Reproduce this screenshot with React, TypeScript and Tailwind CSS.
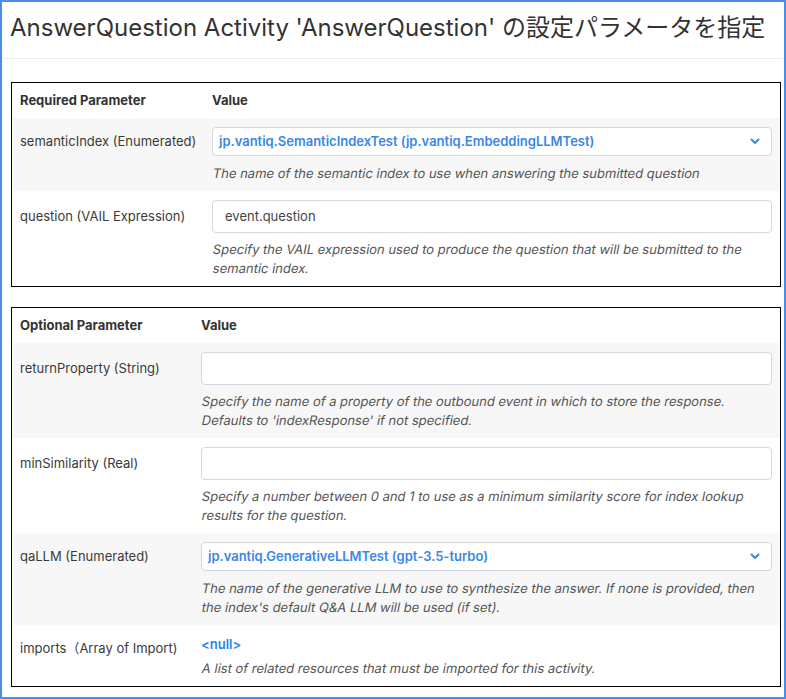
import React from "react";

const FONT = "font-['Inter','Noto_Sans_CJK_JP',sans-serif]";

function Chevron() {
  return (
    <svg width="10" height="7" viewBox="0 0 10 7" className="shrink-0">
      <polyline points="1.5,1.5 5,5 8.5,1.5" fill="none" stroke="#3a87e8" strokeWidth="2" strokeLinecap="round" strokeLinejoin="round" />
    </svg>
  );
}

type RowProps = {
  label: string;
  kind: "select" | "input" | "null";
  value?: string;
  desc: string[];
  gray?: boolean;
  labelW: string;
};

function Row({ label, kind, value, desc, gray, labelW }: RowProps) {
  const ctrlH = kind === "select" ? "h-[29px]" : kind === "input" ? "h-[33px]" : "h-[29px]";
  const mt = kind === "null" ? "mt-[5px]" : kind === "input" ? "mt-[7px]" : "mt-[8px]";
  return (
    <div className={`flex ${gray ? "bg-[#f7f7f7]" : "bg-white"}`}>
      <div className={`${labelW} shrink-0 pl-[8px] pt-[9px]`}>
        <div className={`${ctrlH} flex items-center text-[13px] text-[#3a3a3a]`}>{label}</div>
      </div>
      <div className="flex-1 pl-[8px] pr-[8px] pt-[9px] pb-[8px]">
        {kind === "select" && (
          <div className="h-[29px] rounded-[4px] border border-[#d3d6de] bg-white flex items-center justify-between pl-[6px] pr-[11px]">
            <span className="text-[13px] font-semibold text-[#3a87e8]">{value}</span>
            <Chevron />
          </div>
        )}
        {kind === "input" && (
          <div className="h-[33px] rounded-[4px] border border-[#d3d6de] bg-white flex items-center pl-[12px]">
            <span className="text-[13px] text-[#444]">{value}</span>
          </div>
        )}
        {kind === "null" && (
          <div className="h-[19px] mt-[1px] flex items-center text-[13px] font-semibold text-[#2f80ed]">&lt;null&gt;</div>
        )}
        <div className={`${mt} text-[13px] text-[#555]`}>
          {desc.map((d, i) => (
            <div key={i} className="h-[19px] flex items-center">
              <span className="-skew-x-[11deg] origin-[0_75%] whitespace-nowrap">{d}</span>
            </div>
          ))}
        </div>
      </div>
    </div>
  );
}

function Header({ left, labelW }: { left: string; labelW: string }) {
  return (
    <div className="flex h-[35px] items-center text-[13px] font-bold text-[#333]">
      <div className={`${labelW} shrink-0 pl-[8px]`}>{left}</div>
      <div className="pl-[8px]">Value</div>
    </div>
  );
}

export default function App() {
  return (
    <div className={`w-[786px] h-[699px] border-2 border-[#4a8fe7] bg-white overflow-hidden ${FONT}`}>
      <div className="h-[57px] border-b border-[#ededed] flex items-center pl-[8px] pb-[5px]">
        <h1 className="text-[24px] text-[#333] whitespace-nowrap">
          AnswerQuestion Activity 'AnswerQuestion' の設定パラメータを指定
        </h1>
      </div>
      <div className="pl-[9px] pt-[23px]">
        <div className="w-[770px] border border-black">
          <Header left="Required Parameter" labelW="w-[192px]" />
          <Row
            gray
            labelW="w-[192px]"
            label="semanticIndex (Enumerated)"
            kind="select"
            value="jp.vantiq.SemanticIndexTest (jp.vantiq.EmbeddingLLMTest)"
            desc={["The name of the semantic index to use when answering the submitted question"]}
          />
          <Row
            labelW="w-[192px]"
            label="question (VAIL Expression)"
            kind="input"
            value="event.question"
            desc={[
              "Specify the VAIL expression used to produce the question that will be submitted to the",
              "semantic index.",
            ]}
          />
        </div>
        <div className="mt-[20px] w-[770px] border border-black">
          <Header left="Optional Parameter" labelW="w-[181px]" />
          <Row
            gray
            labelW="w-[181px]"
            label="returnProperty (String)"
            kind="input"
            value=""
            desc={[
              "Specify the name of a property of the outbound event in which to store the response.",
              "Defaults to 'indexResponse' if not specified.",
            ]}
          />
          <Row
            labelW="w-[181px]"
            label="minSimilarity (Real)"
            kind="input"
            value=""
            desc={[
              "Specify a number between 0 and 1 to use as a minimum similarity score for index lookup",
              "results for the question.",
            ]}
          />
          <Row
            gray
            labelW="w-[181px]"
            label="qaLLM (Enumerated)"
            kind="select"
            value="jp.vantiq.GenerativeLLMTest (gpt-3.5-turbo)"
            desc={[
              "The name of the generative LLM to use to synthesize the answer. If none is provided, then",
              "the index's default Q&A LLM will be used (if set).",
            ]}
          />
          <Row
            labelW="w-[181px]"
            label="imports（Array of Import)"
            kind="null"
            desc={["A list of related resources that must be imported for this activity."]}
          />
        </div>
      </div>
    </div>
  );
}
